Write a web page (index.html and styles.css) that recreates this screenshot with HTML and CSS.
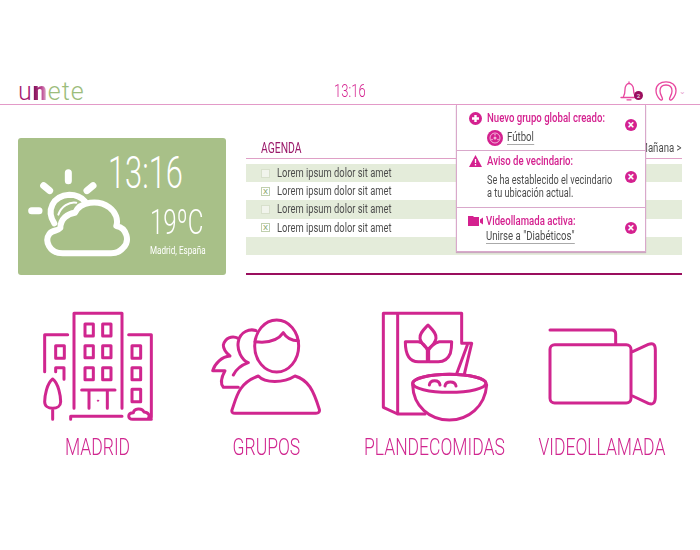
FILE: index.html
```html
<!DOCTYPE html>
<html lang="es">
<head>
    <meta charset="UTF-8">
    <title>Unete</title>
    <link rel="stylesheet" href="styles.css">
</head>
<body>
    <header class="topbar">
        <div class="logo"><span class="logo-u">u</span><span class="logo-n">n</span><span class="logo-rest">ete</span></div>
        <div class="clock">13:16</div>
        <div class="top-icons">
            <div class="bell">
                <svg width="22" height="20" viewBox="0 0 22 20" fill="none" stroke="#e8479f" stroke-width="1.300" stroke-linecap="round" stroke-linejoin="round">
                    <path d="M1 16.500H16M9 2V1M3.500 15.500C5 13 5 11 5 8.500C5 5 7 2.500 9 2.500C11 2.500 13.500 5 13.500 8.500C13.500 11 14 13 15 15"/>
                    <path d="M7 18.800H11"/>
                </svg>
                <span class="badge">2</span>
            </div>
            <svg class="user" width="22" height="20" viewBox="0 0 22 20" fill="none" stroke="#e8479f" stroke-width="1.300" stroke-linecap="round" stroke-linejoin="round">
                <path d="M5 18.500C2.500 16 1 13 1 9.500C1 4 5.500 .8 11 .8C16.500 .8 21 4 21 9.500C21 13 19.500 16 17 18.500C16 19.500 14.500 19 14.500 18C14.500 16 17 14 17 10C17 6 14.500 4 11 4C7.500 4 5 6 5 10C5 14 7.500 16 7.500 18C7.500 19 6 19.500 5 18.500Z"/>
            </svg>
            <span class="caret">&#8964;</span>
        </div>
    </header>

    <div class="notices">
        <div class="notice notice-one">
            <div class="notice-body">
                <div class="notice-title">
                    <svg width="13" height="13" viewBox="0 0 13 13"><circle cx="6.500" cy="6.500" r="6.500" fill="#d4218f"/><path d="M6.500 3V10M3 6.500H10" stroke="#fff" stroke-width="2.400"/></svg>
                    <span class="narrow">Nuevo grupo global creado:</span>
                </div>
                <div class="notice-group">
                    <svg width="16" height="16" viewBox="0 0 16 16"><circle cx="8" cy="8" r="8" fill="#d4218f"/><circle cx="8" cy="8" r="5" fill="none" stroke="#f3b5d9" stroke-width="1"/><circle cx="8" cy="8" r="1.500" fill="#f3b5d9"/><circle cx="8" cy="4.800" r=".8" fill="#f3b5d9"/><circle cx="5" cy="9.500" r=".8" fill="#f3b5d9"/><circle cx="11" cy="9.500" r=".8" fill="#f3b5d9"/></svg>
                    <a class="notice-link narrow">Fútbol</a>
                </div>
            </div>
            <span class="close">&times;</span>
        </div>
        <div class="notice notice-two">
            <div class="notice-body">
                <div class="notice-title">
                    <svg width="13" height="12" viewBox="0 0 13 12"><path d="M6.500 0L13 12H0Z" fill="#d4218f"/><path d="M6.500 4V8M6.500 9V10.500" stroke="#fff" stroke-width="1.300"/></svg>
                    <span class="narrow">Aviso de vecindario:</span>
                </div>
                <p class="notice-text narrow">Se ha establecido el vecindario<br>a tu ubicación actual.</p>
            </div>
            <span class="close">&times;</span>
        </div>
        <div class="notice notice-three">
            <div class="notice-body">
                <div class="notice-title">
                    <svg class="video-mini" width="15" height="10" viewBox="0 0 15 10"><path d="M0 0H5L6 1H11V10H0ZM12 3.500L15 1.500V8.500L12 6.500Z" fill="#d4218f"/></svg>
                    <span class="narrow">Videollamada activa:</span>
                </div>
                <a class="notice-link notice-join narrow">Unirse a "Diabéticos"</a>
            </div>
            <span class="close">&times;</span>
        </div>
    </div>

    <main class="dashboard">
        <section class="weather">
            <svg class="weather-icon" width="104" height="92" viewBox="78 292 312 276" fill="none" stroke="#fff" stroke-width="18" stroke-linecap="round" stroke-linejoin="round">
                <path d="M202 306V330M128 345L146 360M276 345L258 360M92 420H114" stroke-width="21"/>
                <path d="M160 458C135 420 155 375 205 372C225 372 240 378 252 392"/>
                <path d="M172 432C180 408 205 392 226 396" stroke-width="6"/>
                <path d="M185 548C145 548 130 510 145 490C155 477 170 482 178 472C178 445 200 428 222 426C238 392 292 386 325 410C345 425 352 448 346 466C378 472 388 512 366 532C355 545 342 548 330 548Z"/>
            </svg>
            <div class="weather-info">
                <div class="weather-time">13:16</div>
                <div class="weather-temp">19ºC</div>
                <div class="weather-place">Madrid, España</div>
            </div>
        </section>

        <section class="agenda">
            <div class="agenda-head">
                <h2>AGENDA</h2>
                <span class="agenda-next">Mañana &gt;</span>
            </div>
            <ul class="agenda-list">
                <li class="agenda-row"><span class="check"></span><span class="narrow">Lorem ipsum dolor sit amet</span></li>
                <li class="agenda-row"><span class="check checked">X</span><span class="narrow">Lorem ipsum dolor sit amet</span></li>
                <li class="agenda-row"><span class="check"></span><span class="narrow">Lorem ipsum dolor sit amet</span></li>
                <li class="agenda-row"><span class="check checked">X</span><span class="narrow">Lorem ipsum dolor sit amet</span></li>
                <li class="agenda-row"></li>
            </ul>
        </section>
    </main>

    <nav class="tiles">
        <a class="tile">
            <svg viewBox="-18 30 504 336" fill="none" stroke="#d0268f" stroke-width="9" stroke-linecap="round" stroke-linejoin="round">
                <path d="M162 325V40H306V325M74 215V104H143M326 104H394V352M152 358V349H306"/>
                <rect x="195" y="72" width="25" height="36"/><rect x="248" y="72" width="25" height="36"/>
                <rect x="195" y="137" width="25" height="36"/><rect x="248" y="137" width="25" height="36"/>
                <rect x="195" y="203" width="25" height="36"/><rect x="248" y="203" width="25" height="36"/>
                <rect x="107" y="137" width="26" height="38"/>
                <rect x="336" y="137" width="26" height="38"/><rect x="336" y="203" width="26" height="36"/><rect x="336" y="268" width="26" height="37"/>
                <path d="M107 215V203H132V238M185 270H285M207 270V325M262 270V325"/>
                <circle cx="234" cy="302" r="2" fill="#d0268f" stroke-width="3"/>
                <path d="M98 237C80 250 74 290 74 305C74 318 85 325 98 325C111 325 122 318 122 305C122 290 116 250 98 237ZM98 325V358"/>
                <path d="M394 358H338C322 358 322 338 340 338C342 325 366 322 372 336C385 336 390 348 386 352"/>
            </svg>
            <span>MADRID</span>
        </a>
        <a class="tile">
            <svg viewBox="486 30 504 336" fill="none" stroke="#d0268f" stroke-width="9" stroke-linecap="round" stroke-linejoin="round">
                <ellipse cx="770" cy="138" rx="66" ry="78"/>
                <path d="M705 125C745 130 775 120 790 98C800 115 815 122 835 122"/>
                <path d="M636 330C650 290 655 250 715 228C735 250 790 250 825 228C865 240 880 270 898 328C900 336 895 340 888 340H645C638 340 634 336 636 330Z"/>
                <path d="M708 92C690 85 660 95 655 125C650 150 665 180 685 188C665 195 650 205 640 225"/>
                <path d="M655 115C635 105 615 115 610 135C610 150 620 160 630 168C605 170 585 190 578 212H615C605 230 600 250 610 262H655"/>
            </svg>
            <span>GRUPOS</span>
        </a>
        <a class="tile">
            <svg viewBox="0 30 504 336" fill="none" stroke="#d0268f" stroke-width="9" stroke-linecap="round" stroke-linejoin="round">
                <path d="M335 125V40H100V322L143 342H225M143 40V342"/>
                <path d="M234 75C220 90 208 100 210 115C212 130 225 140 234 148C243 140 256 130 258 115C260 100 248 90 234 75Z"/>
                <path d="M166 125H205C220 128 228 140 232 150V185H205C180 185 166 165 166 125Z"/>
                <path d="M305 125H268C255 128 240 140 236 150V185H265C282 185 295 175 301 160C304 150 305 140 305 125Z"/>
                <path d="M335 130H365L340 235M352 135L315 235"/>
                <ellipse cx="298" cy="250" rx="110" ry="27" fill="#fff"/>
                <path d="M188 255C190 320 240 360 298 360C355 360 405 320 410 255" fill="#fff"/>
                <ellipse cx="298" cy="250" rx="110" ry="27"/>
                <path d="M238 255C240 238 268 238 270 255M285 258C287 242 315 242 318 258"/>
            </svg>
            <span>PLANDECOMIDAS</span>
        </a>
        <a class="tile">
            <svg viewBox="504 30 504 336" fill="none" stroke="#d0268f" stroke-width="9" stroke-linecap="round" stroke-linejoin="round">
                <path d="M600 90H785Q797 90 797 102V132"/>
                <rect x="600" y="134" width="243" height="175" rx="14"/>
                <path d="M848 155L895 133Q916 125 916 150V290Q916 318 895 310L848 288"/>
            </svg>
            <span>VIDEOLLAMADA</span>
        </a>
    </nav>
</body>
</html>
```

FILE: styles.css
```css
body {
    margin: 0;
    position: relative;
    font-family: Roboto, sans-serif;
    color: #4d4d4d;
}

/* no condensed face is installed, so the narrow text is squeezed */
.narrow {
    display: inline-block;
    white-space: nowrap;
    transform: scaleX(0.8);
    transform-origin: left;
}

.topbar {
    display: grid;
    grid-template-columns: 1fr auto 1fr;
    align-items: end;
    height: 104px;
    padding: 0 18px;
    border-bottom: 1px solid #e39ac8;
}

.logo {
    font-size: 25px;
    font-weight: 300;
    line-height: 30px;
    height: 27px;
    letter-spacing: 1px;
}

.logo-u {
    color: #a51a70;
}

.logo-n {
    font-weight: 900;
    background: linear-gradient(90deg, #7d0c55, #c04a95 60%, #e6d8e0);
    background-clip: text;
    -webkit-background-clip: text;
    color: transparent;
}

.logo-rest {
    color: #9cbd7c;
}

.clock {
    font-weight: 300;
    font-size: 18px;
    line-height: 24px;
    height: 24px;
    margin-bottom: 1px;
    color: #d4218f;
    transform: scaleX(0.72);
}

.top-icons {
    display: flex;
    justify-content: flex-end;
    align-items: center;
    gap: 13px;
    height: 26px;
    margin-right: -4px;
}

.bell {
    position: relative;
    width: 22px;
    height: 20px;
}

.badge {
    position: absolute;
    right: -1px;
    bottom: 1px;
    width: 9px;
    height: 9px;
    border-radius: 50%;
    background: #9a0e5e;
    color: #fff;
    font-size: 6px;
    line-height: 9px;
    text-align: center;
}

.user {
    margin-right: -11px;
}

.caret {
    color: #e6a0cc;
    font-size: 8px;
}

.dashboard {
    display: flex;
    gap: 20px;
    padding: 33px 18px 0;
}

.weather {
    display: flex;
    box-sizing: border-box;
    width: 208px;
    height: 137px;
    padding: 15px 0 0 9px;
    border-radius: 3px;
    background: #a8c088;
    color: #fff;
}

.weather-icon {
    flex: none;
    margin-top: 15px;
}

.weather-info {
    margin-left: -28px;
    display: flex;
    flex-direction: column;
    align-items: flex-end;
    width: 100px;
}

.weather-time {
    width: 100%;
    font-weight: 300;
    font-size: 44px;
    line-height: 40px;
    white-space: nowrap;
    transform: translateX(5px) scaleX(0.7);
    transform-origin: left;
}

.weather-temp {
    font-weight: 300;
    font-size: 35px;
    line-height: 36px;
    margin-top: 12px;
    transform: scaleX(0.69);
    transform-origin: right;
}

.weather-place {
    font-size: 10px;
    line-height: 14px;
    margin: 3px -3px 0 0;
    white-space: nowrap;
    transform: scaleX(0.81);
    transform-origin: right;
}

.agenda {
    flex: 1;
    box-sizing: border-box;
    height: 137px;
    border-bottom: 2px solid #9a0e5e;
}

.agenda-head {
    display: flex;
    justify-content: space-between;
    align-items: center;
    height: 20px;
    border-bottom: 1.5px solid #dfa0c6;
}

.agenda-head h2 {
    margin: 0 0 0 15px;
    font-size: 14px;
    font-weight: normal;
    color: #9a1a6a;
    transform: scaleX(0.74);
    transform-origin: left;
}

.agenda-next {
    font-size: 12px;
    white-space: nowrap;
    transform: scaleX(0.8);
    transform-origin: right;
}

.agenda-list {
    list-style: none;
    margin: 5px 0 0;
    padding: 0;
}

.agenda-row {
    display: flex;
    align-items: center;
    gap: 7px;
    height: 18.200px;
    padding-left: 15px;
    font-size: 12px;
}

.agenda-row .narrow {
    transform: scaleX(0.78);
}

.agenda-row:nth-child(odd) {
    background: #e4ecda;
}

.check {
    box-sizing: border-box;
    width: 9px;
    height: 9px;
    background: #f1f4ec;
    border: 1px solid #d8e0cc;
    font-size: 8px;
    line-height: 7px;
    text-align: center;
    color: #86a468;
}

.checked {
    background: #fff;
    border-color: #c0cfae;
}

.notices {
    position: absolute;
    z-index: 1;
    top: 105px;
    left: 456px;
    box-sizing: border-box;
    width: 190px;
    background: #fff;
    border: 1px solid #d9a8cb;
    border-top: 0;
    box-shadow: 0 1px 1px #c9a8bf;
}

.notice {
    display: flex;
    box-sizing: border-box;
    padding: 0 8px 0 12px;
    border-bottom: 1px solid #d9a8cb;
}

.notice:last-child {
    border-bottom: 0;
}

.notice-body {
    flex: 1;
    min-width: 0;
}

.notice-body svg {
    flex: none;
}

.notice-one {
    height: 46px;
    padding-top: 6px;
}

.notice-one .close {
    margin-top: 8px;
}

.notice-two {
    height: 57px;
    padding-top: 3px;
}

.notice-two .close {
    margin-top: 17px;
}

.notice-three {
    height: 43px;
    padding-top: 6px;
}

.notice-three .close {
    margin-top: 8px;
}

.notice-title {
    display: flex;
    align-items: center;
    gap: 5px;
    height: 14px;
    font-size: 12px;
    font-weight: 500;
    color: #d4218f;
}

.video-mini {
    margin: 0 -2px 0 -1px;
}

.notice-group {
    display: flex;
    align-items: center;
    gap: 4px;
    margin: 5px 0 0 18px;
}

.notice-link {
    font-size: 12px;
    line-height: 13px;
    border-bottom: 1px solid #aaa;
    color: #4d4d4d;
}

.notice-join {
    display: block;
    width: fit-content;
    margin: 2px 0 0 17px;
}

.notice-text {
    display: block;
    margin: 6px 0 0 18px;
    font-size: 12px;
    line-height: 12.500px;
    transform: scaleX(0.76);
}

.close {
    flex: none;
    width: 12px;
    height: 12px;
    border-radius: 50%;
    background: #d4218f;
    color: #fff;
    font-size: 12px;
    font-weight: bold;
    line-height: 12px;
    text-align: center;
}

.tiles {
    display: grid;
    grid-template-columns: repeat(4, 168px);
    padding: 35px 0 0 14px;
}

.tile {
    display: flex;
    flex-direction: column;
    align-items: center;
}

.tile svg {
    display: block;
    width: 168px;
    height: 112px;
}

.tile span {
    margin-top: 12px;
    font-size: 24px;
    font-weight: 300;
    line-height: 26px;
    white-space: nowrap;
    color: #d0268f;
    transform: scaleX(0.73);
}
```
